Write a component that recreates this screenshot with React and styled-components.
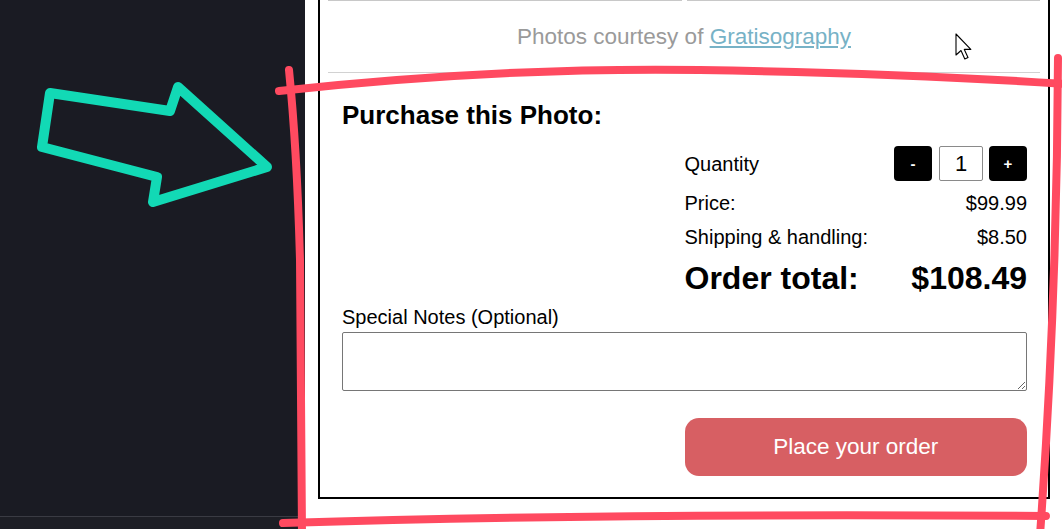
import React from 'react'
import styled, { createGlobalStyle } from 'styled-components'

const GlobalStyle = createGlobalStyle`
  body {
    margin: 0;
    background: #fff;
    font-family: "Liberation Sans", Arial, sans-serif;
  }
`

const Screen = styled.div`
  position: relative;
  width: 1062px;
  height: 529px;
  overflow: hidden;
  display: flex;
`

const Sidebar = styled.div`
  width: 305px;
  background: #1a1b23;
  display: flex;
  flex-direction: column;
  .fill { flex: 1; }
`

const SideFooter = styled.div`
  height: 12px;
  border-top: 1px solid #3a3b43;
  background: #1d1e25;
`

const Stage = styled.div`
  flex: 1;
  background: #fff;
  padding: 0 12px 0 13px;
`

const Card = styled.div`
  border: 2px solid #000;
  border-top: none;
  padding: 0 8px 21px;
  color: #000;
`

const PhotoRow = styled.div`
  display: grid;
  grid-template-columns: 1fr 1fr;
  gap: 5px;
`

const PhotoEdge = styled.div`
  border-top: 1px solid #c8c8c8;
`

const Credit = styled.p`
  margin: 0;
  height: 71px;
  display: flex;
  align-items: center;
  justify-content: center;
  font-size: 22.5px;
  color: #9a9a9a;
  border-bottom: 1px solid #d2d2d2;
  white-space: pre;
  a {
    color: #77b2c6;
    text-decoration: underline;
  }
`

const Purchase = styled.section`
  padding: 0 13px 0 14px;
`

const Title = styled.h3`
  margin: 27px 0 0;
  font-size: 26px;
  line-height: 30px;
  font-weight: bold;
`

const Summary = styled.div`
  display: grid;
  grid-template-columns: 1fr 1fr;
  margin-top: 16px;
`

const Totals = styled.div`
  grid-column: 2;
  display: flex;
  flex-direction: column;
`

const Row = styled.div`
  display: flex;
  justify-content: space-between;
  align-items: center;
  font-size: ${p => (p.$big ? '32px' : '20px')};
  font-weight: ${p => (p.$big ? 'bold' : 'normal')};
  line-height: ${p => (p.$big ? '36px' : '24px')};
  margin-top: ${p => p.$gap || 0}px;
  height: ${p => (p.$tall ? '35px' : 'auto')};
`

const Stepper = styled.div`
  display: flex;
  gap: 6px;
  height: 35px;
`

const StepButton = styled.button`
  width: 38px;
  height: 35px;
  border: none;
  border-radius: 4px;
  background: #000;
  color: #fff;
  font-family: inherit;
  font-size: 15px;
  font-weight: bold;
  padding: 0;
`

const QtyInput = styled.input`
  width: 44px;
  height: 35px;
  box-sizing: border-box;
  border: 1px solid #8a8a8a;
  border-radius: 2px;
  text-align: center;
  font-family: inherit;
  font-size: 22px;
  padding: 0;
  margin-left: 1px;
`

const NotesLabel = styled.label`
  display: block;
  margin-top: 9px;
  font-size: 20px;
  line-height: 24px;
`

const Notes = styled.textarea`
  display: block;
  box-sizing: border-box;
  width: 100%;
  height: 59px;
  margin-top: 3px;
  border: 1px solid #767676;
  border-radius: 2px;
  font-family: inherit;
`

const Actions = styled.div`
  display: grid;
  grid-template-columns: 1fr 1fr;
  margin-top: 27px;
`

const OrderButton = styled.button`
  grid-column: 2;
  height: 58px;
  border: none;
  border-radius: 14px;
  background: #d75f63;
  color: #fff;
  font-family: inherit;
  font-size: 22.5px;
`

const Overlay = styled.svg`
  position: absolute;
  left: 0;
  top: 0;
  pointer-events: none;
`

const App = () => {
  return (
    <Screen>
      <GlobalStyle />
      <Sidebar>
        <div className='fill' />
        <SideFooter />
      </Sidebar>

      <Stage>
        <Card>
          <PhotoRow>
            <PhotoEdge />
            <PhotoEdge />
          </PhotoRow>
          <Credit>
            Photos courtesy of <a href='#'>Gratisography</a>
          </Credit>

          <Purchase>
            <Title>Purchase this Photo:</Title>
            <Summary>
              <Totals>
                <Row $tall>
                  <span>Quantity</span>
                  <Stepper>
                    <StepButton>-</StepButton>
                    <QtyInput defaultValue='1' />
                    <StepButton>+</StepButton>
                  </Stepper>
                </Row>
                <Row $gap={10}>
                  <span>Price:</span>
                  <span>$99.99</span>
                </Row>
                <Row $gap={10}>
                  <span>Shipping &amp; handling:</span>
                  <span>$8.50</span>
                </Row>
                <Row $gap={11} $big>
                  <span>Order total:</span>
                  <span>$108.49</span>
                </Row>
              </Totals>
            </Summary>

            <NotesLabel htmlFor='notes'>Special Notes (Optional)</NotesLabel>
            <Notes id='notes' />

            <Actions>
              <OrderButton>Place your order</OrderButton>
            </Actions>
          </Purchase>
        </Card>
      </Stage>

      {/* annotations drawn over the recording */}
      <Overlay width='1062' height='529' viewBox='0 0 1062 529'>
        <g fill='none' stroke='#ff4a60' strokeWidth='8' strokeLinecap='round' strokeLinejoin='round'>
          <path d='M279 91 Q 500 67 700 70 Q 900 73 1066 84' />
          <path d='M289 70 Q 297 150 300 260 L 302 535' />
          <path d='M283 523 Q 600 513 1046 516' />
          <path d='M1058 58 Q 1057 300 1040 535' />
        </g>
        <polygon
          points='50,93 170,111 178,87 267,167 153,202 157,177 42,147'
          fill='none'
          stroke='#12d9b5'
          strokeWidth='10'
          strokeLinejoin='round'
        />
        <path
          d='M956 34 L956 55 L961 50.5 L964.8 59 L968 57.6 L964.3 49.4 L970.8 49.4 Z'
          fill='#fff'
          stroke='#000'
          strokeWidth='1.1'
          strokeLinejoin='round'
        />
      </Overlay>
    </Screen>
  )
}

export default App
